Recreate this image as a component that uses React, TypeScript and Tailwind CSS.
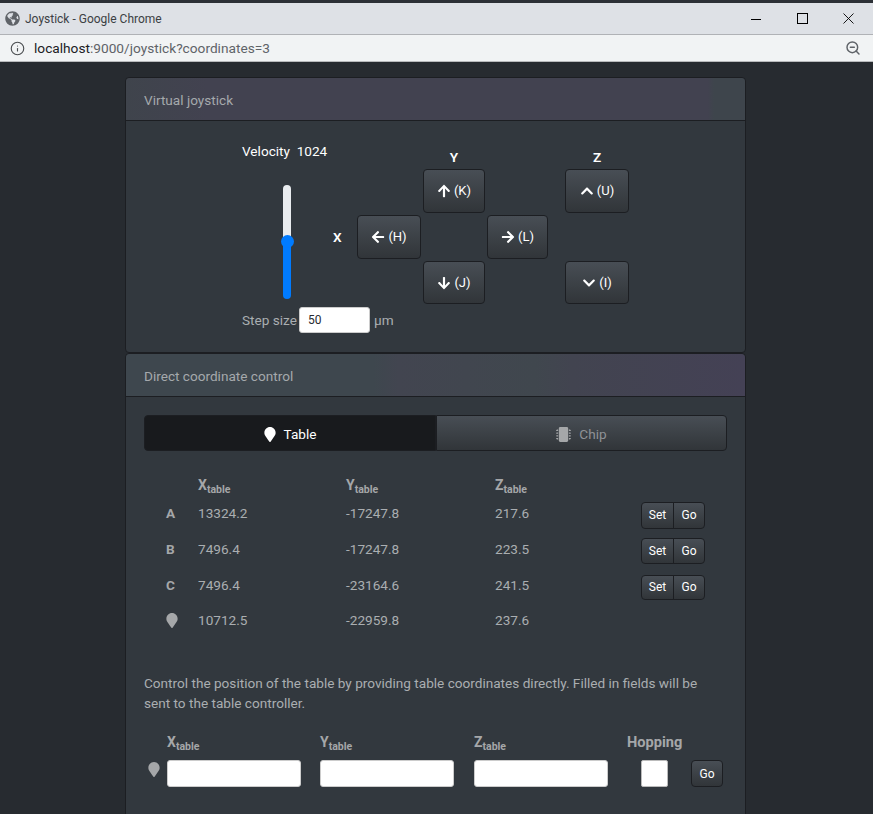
import { Info, ZoomOut } from 'lucide-react'
import { FaArrowUp, FaArrowDown, FaArrowLeft, FaArrowRight, FaChevronUp, FaChevronDown, FaMapMarker, FaMicrochip, FaGlobeAmericas } from 'react-icons/fa'
import { ReactNode } from 'react'

const btn =
  'flex items-center justify-center border border-[#1c1e22] bg-[linear-gradient(#484e55,#3a3f44_60%,#313539)] text-white'

const rows = [
  { id: 'A', x: '13324.2', y: '-17247.8', z: '217.6', h: 'h-[27px]' },
  { id: 'B', x: '7496.4', y: '-17247.8', z: '223.5', h: 'h-[26px]' },
  { id: 'C', x: '7496.4', y: '-23164.6', z: '241.5', h: 'h-[25px]' },
]

function JogButton({ icon, label, className }: { icon: ReactNode; label: string; className: string }) {
  return (
    <button className={`${btn} ${className} gap-[3px] rounded-[4px] text-[13px]`}>
      {icon}
      <span>{label}</span>
    </button>
  )
}

function AxisLabel({ axis, sub = 'table' }: { axis: string; sub?: string }) {
  return (
    <div className="font-bold text-[#a5a7a9] text-[14px] leading-[20px]">
      {axis}
      <sub className="text-[10.5px] leading-none">{sub}</sub>
    </div>
  )
}

function Header({ title, className }: { title: string; className: string }) {
  return (
    <div className={`h-[43px] pt-[2px] flex items-center px-[18px] border-b border-[#1c1e22] rounded-t-[4px] text-[#a5a9ac] ${className}`}>
      {title}
    </div>
  )
}

export default function App() {
  return (
    <div
      className="w-[873px] h-[814px] overflow-hidden bg-[#272b30] text-[13.6px] text-[#aaaeb1]"
      style={{ fontFamily: 'Roboto, "Noto Sans", sans-serif' }}
    >
      {/* browser chrome */}
      <div className="h-[3px] bg-[#2c3036]" />
      <div className="h-[32px] bg-[#dee1e6] border-b border-[#b0b2b6] flex items-center pl-[5px] text-[#3c4043] text-[12px]">
        <FaGlobeAmericas className="w-[15px] h-[15px] text-[#5f6368]" />
        <span className="ml-[5px]">Joystick - Google Chrome</span>
        <div className="ml-auto flex items-center text-black">
          <svg width="10" height="10" viewBox="0 0 10 10" className="mr-[36px]" fill="none" stroke="currentColor">
            <path d="M0 5.5h10" />
          </svg>
          <svg width="11" height="11" viewBox="0 0 11 11" className="mr-[35px]" fill="none" stroke="currentColor">
            <rect x="0.5" y="0.5" width="10" height="10" />
          </svg>
          <svg width="11" height="11" viewBox="0 0 11 11" className="mr-[19px]" fill="none" stroke="currentColor" strokeWidth="0.9">
            <path d="M0.5 0.5l10 10M10.5 0.5l-10 10" />
          </svg>
        </div>
      </div>
      <div className="h-[27px] bg-[#f1f3f4] border-b border-[#b8babc] flex items-center pl-[10px] text-[13.7px] text-[#5f6368]">
        <Info className="w-[15px] h-[15px] text-[#4a4d50]" strokeWidth={1.8} />
        <span className="ml-[9px] text-[#202124]">localhost</span>
        <span>:9000/joystick?coordinates=3</span>
        <ZoomOut className="w-[16px] h-[16px] ml-auto mr-[12px] text-[#5f6368]" strokeWidth={2.2} />
      </div>

      <div className="ml-[125px] w-[621px] pt-[15px]">
        {/* virtual joystick */}
        <section className="border border-[#1c1e22] rounded-[4px] bg-[#32383e]">
          <Header title="Virtual joystick" className="bg-[linear-gradient(90deg,#3f444c,#424250_13%,#424250_94%,#3e454c_95%)]" />
          <div className="pl-[116px] pt-[20px] pb-[19px]">
            <div className="flex">
              <div className="w-[88px]">
                <div className="h-[20px] leading-[20px] text-white whitespace-nowrap">Velocity&nbsp; 1024</div>
                <div className="relative ml-[41px] mt-[24px] w-[8px] h-[114px] rounded-full overflow-visible bg-[linear-gradient(#e9ecef_50%,#007bff_50%)]">
                  <div className="absolute left-[-2.5px] top-[50px] w-[13px] h-[13px] rounded-full bg-[#007bff]" />
                </div>
              </div>
              <div className="mt-[6px] grid grid-cols-[25px_64px_62px_61px_79px] grid-rows-[20px_44px_44px_43px] gap-y-[2px] gap-x-[2px] text-white">
                <div />
                <div />
                <div className="font-semibold text-center leading-[20px]">Y</div>
                <div />
                <div className="font-semibold text-center leading-[20px] ml-[15px] w-[64px]">Z</div>

                <div />
                <div />
                <JogButton className="w-[62px]" icon={<FaArrowUp className="w-[14px] h-[14px]" />} label="(K)" />
                <div />
                <JogButton className="w-[64px] ml-[15px]" icon={<FaChevronUp className="w-[14px] h-[14px]" />} label="(U)" />

                <div className="font-semibold leading-[44px] pl-[3px]">X</div>
                <JogButton className="w-[64px]" icon={<FaArrowLeft className="w-[14px] h-[14px]" />} label="(H)" />
                <div />
                <JogButton className="w-[61px]" icon={<FaArrowRight className="w-[14px] h-[14px]" />} label="(L)" />
                <div />

                <div />
                <div />
                <JogButton className="w-[62px]" icon={<FaArrowDown className="w-[14px] h-[14px]" />} label="(J)" />
                <div />
                <JogButton className="w-[64px] ml-[15px]" icon={<FaChevronDown className="w-[14px] h-[14px]" />} label="(I)" />
              </div>
            </div>
            <div className="mt-[3px] flex items-center h-[26px]">
              <span className="w-[53px] whitespace-nowrap">Step size</span>
              <div className="ml-[4px] w-[71px] h-[26px] bg-white rounded-[3px] border border-[#ccc] pl-[8px] flex items-center text-[12px] text-[#272b30]">50</div>
              <span className="ml-[4px]">µm</span>
            </div>
          </div>
        </section>

        {/* direct coordinate control */}
        <section className="border border-[#1c1e22] rounded-[4px] bg-[#32383e] h-[500px]">
          <Header title="Direct coordinate control" className="bg-[linear-gradient(90deg,#3e474e,#3e474e_40%,#424550_44%,#40474e_66%,#424450_72%,#444155)]" />
          <div className="px-[18px] pt-[18px]">
            <div className="flex h-[36px]">
              <div className="w-[292px] pt-[2px] rounded-l-[4px] border border-[#1c1e22] bg-[#181a1d] text-white flex items-center justify-center gap-[8px]">
                <FaMapMarker className="w-[12px] h-[15px]" />
                Table
              </div>
              <div className="w-[291px] pt-[2px] rounded-r-[4px] border border-[#1c1e22] bg-[linear-gradient(#484e55,#3a3f44_60%,#313539)] text-[#8f9296] flex items-center justify-center gap-[8px]">
                <FaMicrochip className="w-[15px] h-[15px] text-[#a5a7a9]" />
                Chip
              </div>
            </div>

            <div className="mt-[24px] grid grid-cols-[54px_148px_149px_146px_86px] items-center">
              <div />
              <AxisLabel axis="X" />
              <AxisLabel axis="Y" />
              <AxisLabel axis="Z" />
              <div />
              {rows.map((r) => (
                <div key={r.id} className="contents">
                  <div className="h-[36px] flex items-center pl-[22px] font-bold text-[#a5a7a9]">{r.id}</div>
                  <div className="h-[36px] flex items-center">{r.x}</div>
                  <div className="h-[36px] flex items-center">{r.y}</div>
                  <div className="h-[36px] flex items-center">{r.z}</div>
                  <div className="h-[36px] pt-[4px] flex items-center">
                    <div className={`flex ${r.h} w-[64px] text-[12px]`}>
                      <button className={`${btn} w-[33px] rounded-l-[4px]`}>Set</button>
                      <button className={`${btn} w-[32px] -ml-px rounded-r-[4px]`}>Go</button>
                    </div>
                  </div>
                </div>
              ))}
              <div className="h-[35px] flex items-center pl-[22px] text-[#a5a7a9]">
                <FaMapMarker className="w-[12px] h-[15px]" />
              </div>
              <div className="h-[35px] flex items-center">10712.5</div>
              <div className="h-[35px] flex items-center">-22959.8</div>
              <div className="h-[35px] flex items-center">237.6</div>
              <div />
            </div>

            <p className="mt-[35px] leading-[20px] max-w-[565px]">
              Control the position of the table by providing table coordinates directly. Filled in fields will be
              sent to the table controller.
            </p>

            <div className="mt-[19px] grid grid-cols-[23px_153px_154px_153px_50px_63px] items-center">
              <div />
              <AxisLabel axis="X" />
              <AxisLabel axis="Y" />
              <AxisLabel axis="Z" />
              <div className="col-span-2 font-bold text-[14.6px] text-[#a5a7a9] leading-[20px] whitespace-nowrap">Hopping</div>
              <div className="col-start-1 row-start-2 pl-[4px] text-[#a5a7a9]">
                <FaMapMarker className="w-[12px] h-[15px]" />
              </div>
              <input className="col-start-2 row-start-2 mt-[8px] w-[134px] h-[27px] rounded-[3px] bg-white border border-[#ccc]" />
              <input className="col-start-3 row-start-2 mt-[8px] w-[134px] h-[27px] rounded-[3px] bg-white border border-[#ccc]" />
              <input className="col-start-4 row-start-2 mt-[8px] w-[134px] h-[27px] rounded-[3px] bg-white border border-[#ccc]" />
              <div className="col-start-5 row-start-2 mt-[8px] ml-[14px] w-[27px] h-[27px] rounded-[2px] bg-white border border-[#bbb]" />
              <button className={`${btn} col-start-6 row-start-2 mt-[8px] ml-[14px] w-[32px] h-[27px] rounded-[4px] text-[12px]`}>Go</button>
            </div>
          </div>
        </section>
      </div>
    </div>
  )
}
